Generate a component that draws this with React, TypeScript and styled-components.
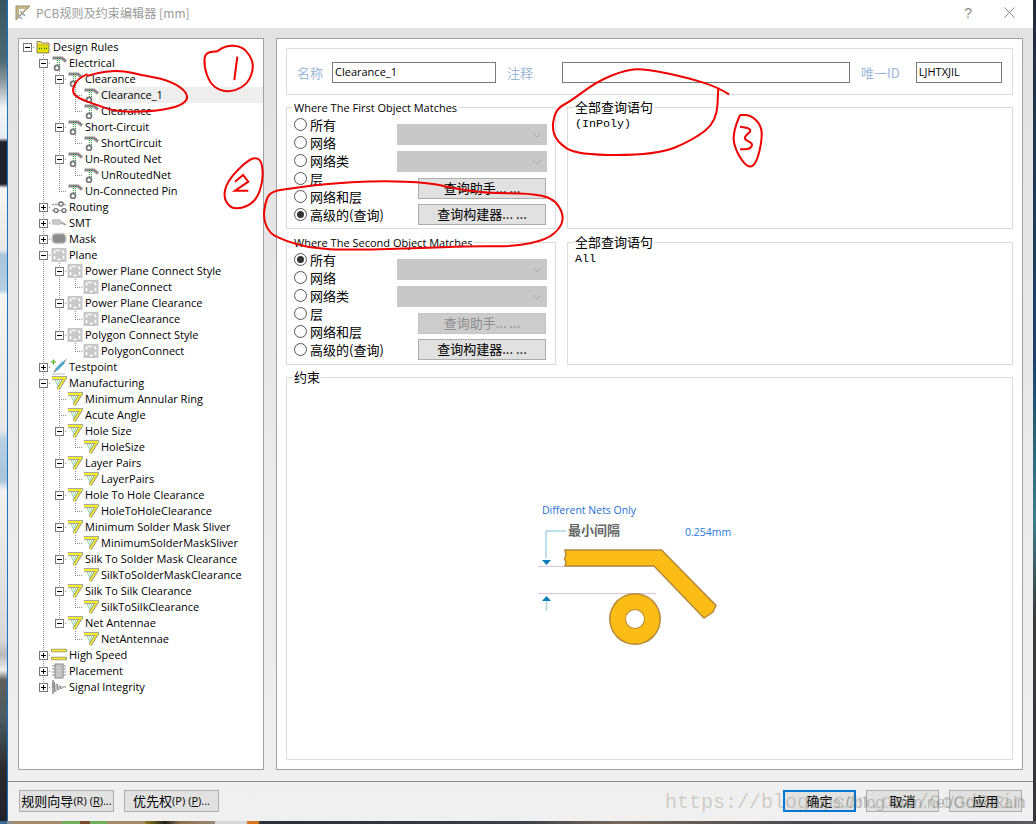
// libraries
import React from 'react';
import styled, { createGlobalStyle } from 'styled-components';

const UI_FONT = '"Open Sans", "Noto Sans CJK SC", sans-serif';
const CJK_FONT = '"Noto Sans CJK SC", "Noto Sans", sans-serif';

const GlobalStyle = createGlobalStyle`
  html, body { margin: 0; padding: 0; background: #1b2430; }
  * { box-sizing: border-box; }
`;

const Desktop = styled.div`
  position: relative;
  width: 1036px;
  height: 824px;
  overflow: hidden;
  font-family: ${CJK_FONT};
  color: #000;
  background:
    linear-gradient(to right, #3a6a9a 0, #3a6a9a 7px, #8d8d8d 7px, #8d8d8d 13px, #a58a6c 13px, #a58a6c 62px, #6fae5c 62px, #6fae5c 80px, #7a4a2a 80px, #7a4a2a 90px, #6fae5c 90px, #6fae5c 107px, #a58a6c 107px, #a58a6c 145px, #8a7a20 145px, #20201a 165px, #8d6d50 180px, #9a8a78 215px, #d8d8d8 215px, #d8d8d8 247px, #d9741a 247px, #d9741a 258px, #2a2f38 260px, #3b3f48 520px, #77695c 620px, #4a4a50 800px, #5a5a60 1036px) bottom / 100% 3px no-repeat,
    linear-gradient(#3a5560 0, #4a6a74 60px, #8a959c 80px, #f2f5f8 108px, #e8eef4 138px, #20222c 142px, #20222c 184px, #f5f5f5 188px, #e8e8e8 250px, #a8c4dc 255px, #b8cfe2 290px, #f5f5f5 295px, #e8e8e8 430px, #b8cfe2 440px, #a8c4dc 480px, #f2f2f2 490px, #d8d8d8 640px, #b8b8b8 655px, #f0f0f0 670px, #60605a 680px, #4a5a60 720px, #2a2a2a 770px, #20232a 824px) left / 7px 100% no-repeat,
    linear-gradient(#232b38 0, #1e3a5a 200px, #1d4468 360px, #3f7c8c 520px, #3a3a3a 620px, #34343a 824px) right / 3px 100% no-repeat,
    #222;
`;

const Dialog = styled.div`
  display: flex;
  flex-direction: column;
  width: 1026px;
  height: 821px;
  margin-left: 7px;
  border-left: 1px solid #1a6fc0;
  background: linear-gradient(#e2e2e2, #f0f0f0);
`;

const TitleBar = styled.div`
  display: flex;
  align-items: center;
  flex: none;
  height: 28px;
  padding: 0 0 3px 7px;
  background: #fff;
`;

const TitleText = styled.span`
  margin-left: 5px;
  font-size: 12px;
  letter-spacing: 0.1px;
  color: #9a9a9a;
`;

const HelpGlyph = styled.span`
  margin-left: auto;
  margin-right: 32px;
  font-family: "Liberation Sans", sans-serif;
  font-size: 14px;
  color: #8a8a8a;
`;

const CloseIcon = styled.svg`
  margin-right: 18px;
`;

const Main = styled.div`
  display: flex;
  flex: none;
  gap: 12px;
  height: 742px;
  padding: 10px 10px 0 10px;
`;

const TreePanel = styled.div`
  flex: none;
  width: 246px;
  border: 1px solid #a0a0a0;
  background: #fff;
  overflow: hidden;
`;

const TreeRow = styled.div`
  display: flex;
  align-items: center;
  height: 16px;
`;

const GuideCell = styled.span<{ $line: boolean }>`
  flex: none;
  width: 16px;
  height: 16px;
  background: ${({ $line }) => ($line ? 'repeating-linear-gradient(#888 0 1px, transparent 1px 2px) 8px 0 / 1px 100% no-repeat' : 'none')};
`;

const ConnectorCell = styled.span<{ $root: boolean; $last: boolean }>`
  position: relative;
  flex: none;
  width: 16px;
  height: 16px;
  background:
    repeating-linear-gradient(to right, #888 0 1px, transparent 1px 2px) 8px 8px / 8px 1px no-repeat,
    ${({ $root, $last }) => ($root ? 'none' : `repeating-linear-gradient(#888 0 1px, transparent 1px 2px) 8px 0 / 1px ${$last ? '8px' : '100%'} no-repeat`)};
`;

const Expander = styled.span`
  position: absolute;
  left: 4px;
  top: 4px;
  width: 9px;
  height: 9px;
  border: 1px solid #7a7a7a;
  background: #fff;
`;

const ExpanderMark = styled.svg`
  display: block;
`;

const TreeIconBox = styled.span`
  display: flex;
  flex: none;
  width: 16px;
  height: 16px;
`;

const TreeLabel = styled.span<{ $selected: boolean }>`
  flex: 1;
  height: 16px;
  padding-left: 2px;
  font-family: ${UI_FONT};
  font-size: 11px;
  line-height: 16px;
  white-space: nowrap;
  background: ${({ $selected }) => ($selected ? '#eeeeee' : 'transparent')};
`;

const RulesPanel = styled.div`
  display: flex;
  flex: 1;
  flex-direction: column;
  gap: 12px;
  padding: 9px;
  border: 1px solid #a0a0a0;
  background: #fff;
`;

const NameRow = styled.div`
  display: flex;
  align-items: center;
  flex: none;
  gap: 11px;
  height: 47px;
  padding-left: 10px;
  padding-top: 1px;
  border: 1px solid #dcdcdc;
`;

const Field = styled.label<{ $gap: number }>`
  display: flex;
  align-items: center;
  gap: ${({ $gap }) => $gap}px;
`;

const FieldLabel = styled.span`
  font-size: 13px;
  color: #9db8d6;
`;

const FieldInput = styled.div<{ $width: number }>`
  width: ${({ $width }) => $width}px;
  height: 21px;
  padding-left: 2px;
  border: 1px solid #7a7a7a;
  font-family: ${UI_FONT};
  font-size: 11px;
  line-height: 18px;
  background: #fff;
`;

const MatchGrid = styled.div`
  display: grid;
  flex: none;
  grid-template-columns: 270px 1fr;
  grid-template-rows: 122px 123px;
  gap: 13px 11px;
`;

const GroupBox = styled.div`
  position: relative;
  display: flex;
  border: 1px solid #dcdcdc;
`;

const GroupTitle = styled.span<{ $cjk?: boolean }>`
  position: absolute;
  left: 6px;
  top: ${({ $cjk }) => ($cjk ? '-10px' : '-9px')};
  padding: 0 1px;
  font-family: ${({ $cjk }) => ($cjk ? CJK_FONT : UI_FONT)};
  font-size: ${({ $cjk }) => ($cjk ? '13px' : '11px')};
  line-height: 17px;
  white-space: nowrap;
  background: #fff;
`;

const RadioColumn = styled.div`
  display: flex;
  flex-direction: column;
  padding: 7px 0 0 7px;
`;

const RadioRow = styled.div`
  display: flex;
  align-items: center;
  gap: 3px;
  height: 18px;
  font-size: 13px;
  white-space: nowrap;
`;

const RadioDot = styled.span<{ $checked: boolean }>`
  display: flex;
  align-items: center;
  justify-content: center;
  width: 13px;
  height: 13px;
  border: 1px solid #555;
  border-radius: 50%;
  background: #fff;

  &::after {
    content: '';
    display: ${({ $checked }) => ($checked ? 'block' : 'none')};
    width: 7px;
    height: 7px;
    border-radius: 50%;
    background: #333;
  }
`;

const ControlColumn = styled.div`
  display: flex;
  flex-direction: column;
  width: 150px;
  margin-left: auto;
  margin-right: 8px;
  padding-top: 16px;
`;

const DisabledSelect = styled.div`
  display: flex;
  align-items: center;
  justify-content: flex-end;
  flex: none;
  height: 21px;
  margin-bottom: 6px;
  padding-right: 5px;
  background: #c8c8c8;
`;

const QueryButton = styled.div<{ $disabled?: boolean }>`
  flex: none;
  width: 128px;
  height: 21px;
  margin-left: 21px;
  margin-bottom: 5px;
  border: 1px solid ${({ $disabled }) => ($disabled ? '#c4c4c4' : '#adadad')};
  font-size: 13px;
  line-height: 18px;
  text-align: center;
  white-space: nowrap;
  color: ${({ $disabled }) => ($disabled ? '#8e8e8e' : '#000')};
  background: ${({ $disabled }) => ($disabled ? '#cccccc' : '#e1e1e1')};

  &:first-of-type {
    margin-top: -1px;
  }
`;

const QueryText = styled.pre`
  margin: 0;
  padding: 9px 0 0 7px;
  font-family: "Liberation Mono", monospace;
  font-size: 11.7px;
  line-height: 14px;
`;

const ConstraintBox = styled(GroupBox)`
  flex: 1;
  padding: 125px 0 0 250px;
`;

const Footer = styled.div`
  display: flex;
  justify-content: space-between;
  flex: none;
  height: 31px;
  margin-top: 11px;
  padding: 8px 11px 0 11px;
  border-top: 1px solid #8a8a8a;
`;

const ButtonGroup = styled.div`
  display: flex;
  gap: 10px;
`;

const FooterButton = styled.div<{ $width: number; $primary?: boolean }>`
  display: flex;
  align-items: center;
  justify-content: center;
  width: ${({ $width }) => $width}px;
  height: 22px;
  padding-bottom: 1px;
  border: ${({ $primary }) => ($primary ? '2px solid #0078d7' : '1px solid #adadad')};
  font-size: 13px;
  white-space: nowrap;
  background: #e1e1e1;
`;

const Mnemonic = styled.span`
  margin-left: 3px;
  font-family: ${UI_FONT};
  font-size: 11px;
`;

const MnemonicKey = styled.span`
  text-decoration: underline;
`;

const Small = styled.span`
  font-family: ${UI_FONT};
  font-size: 11px;
`;

const Annotations = styled.svg`
  position: absolute;
  left: 0;
  top: 0;
  pointer-events: none;
`;

const WatermarkMono = styled.span`
  position: absolute;
  left: 665px;
  top: 792px;
  font-family: "Liberation Mono", monospace;
  font-size: 20px;
  line-height: 22px;
  color: rgba(110, 110, 90, 0.28);
  white-space: nowrap;
`;

const WatermarkSans = styled.span`
  position: absolute;
  left: 806px;
  top: 793px;
  font-family: "Liberation Sans", sans-serif;
  font-size: 16px;
  line-height: 20px;
  color: rgba(90, 90, 90, 0.32);
  white-space: nowrap;
`;

type IconKind = 'folder' | 'electrical' | 'routing' | 'smt' | 'mask' | 'plane' | 'testpoint' | 'mfg' | 'speed' | 'placement' | 'signal';

interface TreeNode {
  label: string;
  icon: IconKind;
  closed?: boolean;
  selected?: boolean;
  children?: TreeNode[];
}

const leaf = (icon: IconKind, label: string, selected?: boolean): TreeNode => ({ label, icon, selected });
const parent = (icon: IconKind, label: string, ...children: TreeNode[]): TreeNode => ({ label, icon, children });
const closed = (icon: IconKind, label: string): TreeNode => ({ label, icon, closed: true });

const RULE_TREE: TreeNode = parent('folder', 'Design Rules',
  parent('electrical', 'Electrical',
    parent('electrical', 'Clearance', leaf('electrical', 'Clearance_1', true), leaf('electrical', 'Clearance')),
    parent('electrical', 'Short-Circuit', leaf('electrical', 'ShortCircuit')),
    parent('electrical', 'Un-Routed Net', leaf('electrical', 'UnRoutedNet')),
    leaf('electrical', 'Un-Connected Pin'),
  ),
  closed('routing', 'Routing'),
  closed('smt', 'SMT'),
  closed('mask', 'Mask'),
  parent('plane', 'Plane',
    parent('plane', 'Power Plane Connect Style', leaf('plane', 'PlaneConnect')),
    parent('plane', 'Power Plane Clearance', leaf('plane', 'PlaneClearance')),
    parent('plane', 'Polygon Connect Style', leaf('plane', 'PolygonConnect')),
  ),
  closed('testpoint', 'Testpoint'),
  parent('mfg', 'Manufacturing',
    leaf('mfg', 'Minimum Annular Ring'),
    leaf('mfg', 'Acute Angle'),
    parent('mfg', 'Hole Size', leaf('mfg', 'HoleSize')),
    parent('mfg', 'Layer Pairs', leaf('mfg', 'LayerPairs')),
    parent('mfg', 'Hole To Hole Clearance', leaf('mfg', 'HoleToHoleClearance')),
    parent('mfg', 'Minimum Solder Mask Sliver', leaf('mfg', 'MinimumSolderMaskSliver')),
    parent('mfg', 'Silk To Solder Mask Clearance', leaf('mfg', 'SilkToSolderMaskClearance')),
    parent('mfg', 'Silk To Silk Clearance', leaf('mfg', 'SilkToSilkClearance')),
    parent('mfg', 'Net Antennae', leaf('mfg', 'NetAntennae')),
  ),
  closed('speed', 'High Speed'),
  closed('placement', 'Placement'),
  closed('signal', 'Signal Integrity'),
);

const TreeGlyph = ({ kind }: { kind: IconKind }) => {
  switch (kind) {
    case 'folder':
      return (
        <svg width="16" height="16" viewBox="0 0 16 16">
          <path d="M2 4V2.500h4l1 1.500h7v10H2z" fill="#f5e04a" stroke="#8d8d6a" />
          <rect x="2.500" y="6" width="11" height="7.500" fill="#e8e000" stroke="#9a9a40" strokeWidth="0.600" />
          <path d="M4 9.500h3M9 9.500h3" stroke="#1d7a2a" strokeWidth="1.400" strokeDasharray="1 1" />
        </svg>
      );
    case 'electrical':
      return (
        <svg width="16" height="16" viewBox="0 0 16 16">
          <path d="M1.500 3h9.500l4 3.500" fill="none" stroke="#8a8a8a" strokeWidth="3" />
          <path d="M6 3.500h3M6 5.500h3M6 7.500h3M6 9.500h3" stroke="#1f9a35" strokeWidth="1.100" strokeDasharray="1 1" />
          <circle cx="6" cy="12.800" r="2.500" fill="#fff" stroke="#777" strokeWidth="1.800" />
        </svg>
      );
    case 'routing':
      return (
        <svg width="16" height="16" viewBox="0 0 16 16">
          <path d="M1 5.500h14M1 11.500h14" stroke="#b0b0b0" strokeWidth="1.600" />
          <circle cx="10" cy="5" r="2.200" fill="#eee" stroke="#666" strokeWidth="1.200" />
          <circle cx="5" cy="11.500" r="2" fill="#eee" stroke="#666" strokeWidth="1.200" />
          <circle cx="13" cy="11.500" r="2" fill="#eee" stroke="#666" strokeWidth="1.200" />
        </svg>
      );
    case 'smt':
      return (
        <svg width="16" height="16" viewBox="0 0 16 16">
          <rect x="0.500" y="4" width="10" height="6" rx="2.500" fill="#c8c8c8" />
          <path d="M10 7.500l5 2.500" stroke="#a0a0a0" strokeWidth="1.600" />
        </svg>
      );
    case 'mask':
      return (
        <svg width="16" height="16" viewBox="0 0 16 16">
          <rect x="1" y="2.500" width="14" height="10" rx="4" fill="#8c8c8c" stroke="#cfcfcf" strokeWidth="1.500" />
        </svg>
      );
    case 'plane':
      return (
        <svg width="16" height="16" viewBox="0 0 16 16">
          <rect x="0.500" y="1" width="15" height="14" fill="#c8c8c8" />
          <rect x="3.500" y="3.500" width="9" height="9" rx="2" fill="none" stroke="#fff" strokeWidth="1.600" strokeDasharray="3 2.500" />
        </svg>
      );
    case 'testpoint':
      return (
        <svg width="16" height="16" viewBox="0 0 16 16">
          <path d="M2.500 0.500v5M0 3h5" stroke="#16a016" strokeWidth="1.200" />
          <path d="M2 3h2" stroke="#e8d800" strokeWidth="1.200" />
          <path d="M5 11l8-8" stroke="#4aa8c8" strokeWidth="3" />
          <path d="M13 3l2-2.500M3 13l2-2" stroke="#777" strokeWidth="1.200" />
          <path d="M1 15h13" stroke="#c0c0c0" />
        </svg>
      );
    case 'mfg':
      return (
        <svg width="16" height="16" viewBox="0 0 16 16">
          <path d="M1 3h13l-7 11" fill="none" stroke="#8a8a8a" strokeWidth="3.400" />
          <path d="M1 3h13l-7 11" fill="none" stroke="#f5ee20" strokeWidth="1.800" />
          <path d="M4 6h5M5 8h3M6 10h1.500" stroke="#32b54a" strokeWidth="1" strokeDasharray="1 1" />
        </svg>
      );
    case 'speed':
      return (
        <svg width="16" height="16" viewBox="0 0 16 16">
          <path d="M1.500 3.500h13M1.500 11.500h13" stroke="#8a8a8a" strokeWidth="3.400" strokeLinecap="round" />
          <path d="M1.500 3.500h13M1.500 11.500h13" stroke="#f5ee20" strokeWidth="1.800" strokeLinecap="round" />
        </svg>
      );
    case 'placement':
      return (
        <svg width="16" height="16" viewBox="0 0 16 16">
          <path d="M1 3h3M1 6h3M1 9h3M1 12h3M12 3h3M12 6h3M12 9h3M12 12h3" stroke="#888" />
          <rect x="4" y="1" width="8" height="14" fill="#c4c4c4" stroke="#8a8a8a" />
        </svg>
      );
    default:
      return (
        <svg width="16" height="16" viewBox="0 0 16 16">
          <path d="M0.500 8h1.500V1v14V3.500h1.500v9h1.500v-7h1.500v5h1.500V7h1.500v2.500h1.500V8H15" fill="none" stroke="#8a8a8a" />
        </svg>
      );
  }
};

const RuleTreeRows = ({ node, trail, isRoot, isLast }: { node: TreeNode; trail: boolean[]; isRoot: boolean; isLast: boolean }) => {
  const hasBox = !!node.children || !!node.closed;
  return (
    <>
      <TreeRow>
        {trail.map((line, i) => <GuideCell key={i} $line={line} />)}
        <ConnectorCell $root={isRoot} $last={isLast}>
          {hasBox && (
            <Expander>
              <ExpanderMark width="7" height="7" viewBox="0 0 7 7">
                <path d={node.closed ? 'M1 3.500h5M3.500 1v5' : 'M1 3.500h5'} stroke="#000" />
              </ExpanderMark>
            </Expander>
          )}
        </ConnectorCell>
        <TreeIconBox><TreeGlyph kind={node.icon} /></TreeIconBox>
        <TreeLabel $selected={!!node.selected}>{node.label}</TreeLabel>
      </TreeRow>
      {node.children?.map((child, i) => {
        const last = i === node.children!.length - 1;
        const nextTrail = [...trail, !isRoot && !isLast];
        return <RuleTreeRows key={child.label + i} node={child} trail={nextTrail} isRoot={false} isLast={last} />;
      })}
    </>
  );
};

const SelectChevron = () => (
  <svg width="10" height="6" viewBox="0 0 10 6">
    <path d="M1 1l4 4 4-4" fill="none" stroke="#a9a9a9" />
  </svg>
);

const MATCH_OPTIONS = ['所有', '网络', '网络类', '层', '网络和层', '高级的(查询)'];

const MatchGroup = ({ title, checked, helperDisabled }: { title: string; checked: number; helperDisabled?: boolean }) => (
  <GroupBox>
    <GroupTitle>{title}</GroupTitle>
    <RadioColumn>
      {MATCH_OPTIONS.map((option, i) => (
        <RadioRow key={option}>
          <RadioDot $checked={i === checked} />
          {option}
        </RadioRow>
      ))}
    </RadioColumn>
    <ControlColumn>
      <DisabledSelect><SelectChevron /></DisabledSelect>
      <DisabledSelect><SelectChevron /></DisabledSelect>
      <QueryButton $disabled={helperDisabled}>查询助手... ...</QueryButton>
      <QueryButton>查询构建器... ...</QueryButton>
    </ControlColumn>
  </GroupBox>
);

const ClearanceDiagram = () => (
  <svg width="200" height="145" viewBox="537 503 200 145">
    <text x="542" y="514" fontFamily={UI_FONT} fontSize="10.500" fill="#1f6fd8">Different Nets Only</text>
    <text x="568" y="535" fontFamily={CJK_FONT} fontSize="13" fontWeight="700" fill="#666">最小间隔</text>
    <text x="685" y="536" fontFamily={UI_FONT} fontSize="10.500" fill="#1f78e0">0.254mm</text>
    <path d="M566 531h-20v27" fill="none" stroke="#7cc0da" />
    <path d="M542 560h9l-4.500 5z" fill="#0a7fb8" />
    <path d="M538 566.500h117M538 593.500h118" stroke="#dcc4e4" />
    <path d="M542 601h9l-4.500-5z" fill="#0a7fb8" />
    <path d="M546.500 601v10" stroke="#a8d4e6" strokeWidth="1.500" />
    <path d="M565 550H661.500L716 605.500l-2 4-1 2.500-9 6-50-52H565l1-4-1.500-3 1.500-4z" fill="#fbbc16" stroke="#b8893a" strokeWidth="1.500" />
    <circle cx="635" cy="619" r="26" fill="#b8893a" />
    <circle cx="635" cy="619" r="24.500" fill="#fbbc16" />
    <circle cx="635" cy="619" r="10" fill="#b8893a" />
    <circle cx="635" cy="619" r="9" fill="#fff" />
  </svg>
);

// freehand marks, smoothed through the midpoints of the traced points
const smooth = (points: number[][], scale: number, ox: number, oy: number) => {
  const pts = points.map(([x, y]) => [ox + x / scale, oy + y / scale]);
  let d = `M${pts[0][0]} ${pts[0][1]}`;
  for (let i = 1; i < pts.length - 1; i++) {
    const mx = (pts[i][0] + pts[i + 1][0]) / 2;
    const my = (pts[i][1] + pts[i + 1][1]) / 2;
    d += `Q${pts[i][0]} ${pts[i][1]} ${mx} ${my}`;
  }
  const end = pts[pts.length - 1];
  return `${d}L${end[0]} ${end[1]}`;
};

const MARKS = [
  smooth([[650, 155], [615, 153], [612, 200], [630, 250], [660, 272], [700, 275], [745, 250], [762, 200], [750, 165], [725, 140], [680, 135], [650, 155]], 3, 0, 0),
  'M237.300 56.700L234.300 80',
  smooth([[262, 228], [300, 215], [370, 212], [420, 225], [500, 238], [555, 270], [565, 300], [530, 322], [450, 335], [350, 335], [290, 315], [235, 295], [215, 275], [230, 240], [262, 222]], 3, 0, 0),
  smooth([[735, 490], [690, 530], [668, 585], [690, 625], [730, 625], [770, 600], [790, 540], [785, 480], [760, 472], [735, 490]], 3, 0, 0),
  'M235 181.700L243 175L248.300 181.700L235 190.700H248.300',
  smooth([[0, 450], [-30, 455], [-45, 490], [-50, 540], [-30, 580], [0, 595], [40, 610], [100, 625], [200, 630], [400, 625], [580, 618], [700, 620], [800, 600], [845, 560], [850, 520], [820, 475], [750, 460], [620, 460], [520, 445], [450, 428], [300, 422], [130, 432], [0, 450]], 3, 280, 40),
  smooth([[567, 283], [535, 262], [440, 232], [320, 207], [260, 208], [170, 245], [90, 305], [50, 325], [35, 380], [50, 425], [110, 465], [350, 465], [460, 420], [530, 365], [535, 262]], 3, 540, 0),
  smooth([[600, 345], [575, 400], [590, 460], [625, 505], [650, 490], [668, 410], [660, 370], [630, 345], [600, 345]], 3, 540, 0),
  smooth([[600, 380], [645, 385], [605, 415], [640, 430], [630, 448], [600, 448]], 3, 540, 0),
];

export default function App() {
  return (
    <Desktop>
      <GlobalStyle />
      <Dialog>
        <TitleBar>
          <svg width="16" height="16" viewBox="0 0 16 16">
            <path d="M1 1h14L1 15z" fill="#c9b98a" stroke="#9a8f70" />
            <path d="M4 4h6l-6 6z" fill="#fff" />
            <path d="M2 9l5 5M5 6l5 5" stroke="#9aa7ad" strokeWidth="1.500" />
          </svg>
          <TitleText>PCB规则及约束编辑器 [mm]</TitleText>
          <HelpGlyph>?</HelpGlyph>
          <CloseIcon width="11" height="11" viewBox="0 0 11 11">
            <path d="M0.500 0.500l10 10M10.500 0.500l-10 10" stroke="#8a8a8a" />
          </CloseIcon>
        </TitleBar>
        <Main>
          <TreePanel>
            <RuleTreeRows node={RULE_TREE} trail={[]} isRoot isLast />
          </TreePanel>
          <RulesPanel>
            <NameRow>
              <Field $gap={9}><FieldLabel>名称</FieldLabel><FieldInput $width={164}>Clearance_1</FieldInput></Field>
              <Field $gap={29}><FieldLabel>注释</FieldLabel><FieldInput $width={288} /></Field>
              <Field $gap={16}><FieldLabel>唯一ID</FieldLabel><FieldInput $width={86}>LJHTXJIL</FieldInput></Field>
            </NameRow>
            <MatchGrid>
              <MatchGroup title="Where The First Object Matches" checked={5} />
              <GroupBox>
                <GroupTitle $cjk>全部查询语句</GroupTitle>
                <QueryText>(InPoly)</QueryText>
              </GroupBox>
              <MatchGroup title="Where The Second Object Matches" checked={0} helperDisabled />
              <GroupBox>
                <GroupTitle $cjk>全部查询语句</GroupTitle>
                <QueryText>All</QueryText>
              </GroupBox>
            </MatchGrid>
            <ConstraintBox>
              <GroupTitle $cjk>约束</GroupTitle>
              <ClearanceDiagram />
            </ConstraintBox>
          </RulesPanel>
        </Main>
        <Footer>
          <ButtonGroup>
            <FooterButton $width={95}>规则向导<Small>(R)</Small><Mnemonic>(<MnemonicKey>R</MnemonicKey>)...</Mnemonic></FooterButton>
            <FooterButton $width={95}>优先权<Small>(P)</Small><Mnemonic>(<MnemonicKey>P</MnemonicKey>)...</Mnemonic></FooterButton>
          </ButtonGroup>
          <ButtonGroup>
            <FooterButton $width={73} $primary>确定</FooterButton>
            <FooterButton $width={73}>取消</FooterButton>
            <FooterButton $width={73}>应用</FooterButton>
          </ButtonGroup>
        </Footer>
      </Dialog>
      <WatermarkMono>https://blog.csdn.net/GoodRain</WatermarkMono>
      <WatermarkSans>https://blog.csdn.net/GoodRain</WatermarkSans>
      <Annotations width="1036" height="824" viewBox="0 0 1036 824">
        {MARKS.map((d, i) => <path key={i} d={d} fill="none" stroke="#f00000" strokeWidth="2" />)}
      </Annotations>
    </Desktop>
  );
}
